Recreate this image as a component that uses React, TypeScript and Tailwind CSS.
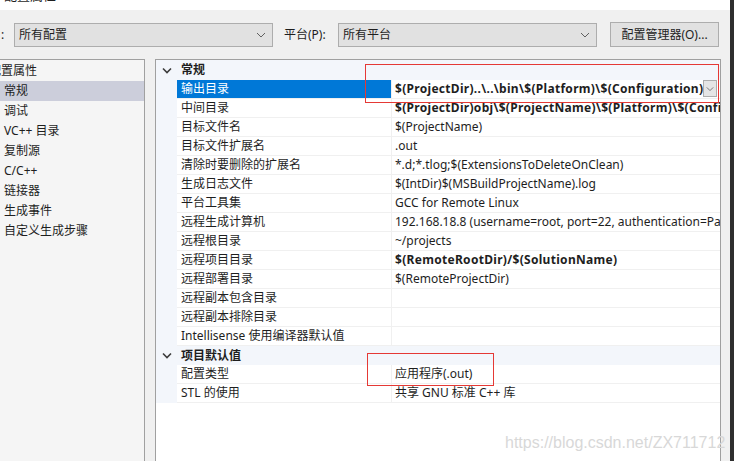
import React from 'react';

const font = '[font-family:"Noto_Sans","Noto_Sans_CJK_SC",sans-serif]';

type Row = { name: string; value: string; bold?: boolean; selected?: boolean };

const general: Row[] = [
  { name: '输出目录', value: '$(ProjectDir)..\\..\\bin\\$(Platform)\\$(Configuration)', bold: true, selected: true },
  { name: '中间目录', value: '$(ProjectDir)obj\\$(ProjectName)\\$(Platform)\\$(Configuration)\\', bold: true },
  { name: '目标文件名', value: '$(ProjectName)' },
  { name: '目标文件扩展名', value: '.out' },
  { name: '清除时要删除的扩展名', value: '*.d;*.tlog;$(ExtensionsToDeleteOnClean)' },
  { name: '生成日志文件', value: '$(IntDir)$(MSBuildProjectName).log' },
  { name: '平台工具集', value: 'GCC for Remote Linux' },
  { name: '远程生成计算机', value: '192.168.18.8 (username=root, port=22, authentication=Password)' },
  { name: '远程根目录', value: '~/projects' },
  { name: '远程项目目录', value: '$(RemoteRootDir)/$(SolutionName)', bold: true },
  { name: '远程部署目录', value: '$(RemoteProjectDir)' },
  { name: '远程副本包含目录', value: '' },
  { name: '远程副本排除目录', value: '' },
  { name: 'Intellisense 使用编译器默认值', value: '' },
];

const defaults: Row[] = [
  { name: '配置类型', value: '应用程序(.out)' },
  { name: 'STL 的使用', value: '共享 GNU 标准 C++ 库' },
];

const tree = ['常规', '调试', 'VC++ 目录', '复制源', 'C/C++', '链接器', '生成事件', '自定义生成步骤'];

function Chevron({ className }: { className?: string }) {
  return (
    <svg width="10" height="6" viewBox="0 0 10 6" className={className}>
      <path d="M1 1 L5 5 L9 1" fill="none" stroke="currentColor" strokeWidth="1" />
    </svg>
  );
}

function Combo({ text }: { text: string }) {
  return (
    <div className="w-[259px] h-[24px] bg-[#e1e1e1] border border-[#adadad] flex items-center justify-between pl-[4px] pr-[6px]">
      <span>{text}</span>
      <Chevron className="text-[#606060]" />
    </div>
  );
}

function Category({ title, h }: { title: string; h: string }) {
  return (
    <div className={`flex items-center bg-[#f3f6fb] ${h}`}>
      <div className="w-[21px] shrink-0 flex justify-center pl-[1px]">
        <svg width="10" height="7" viewBox="0 0 10 7">
          <path d="M1 1.5 L5 5.5 L9 1.5" fill="none" stroke="#3c3c3c" strokeWidth="1.6" />
        </svg>
      </div>
      <span className="pl-[4px] font-bold text-[#1e1e1e]">{title}</span>
    </div>
  );
}

function PropRow({ row }: { row: Row }) {
  return (
    <div className="flex h-[19px] bg-[#f3f6fb]">
      <div className="w-[21px] shrink-0" />
      <div className="flex flex-1 min-w-0 border-b border-[#f0f0f0] bg-white">
        <div
          className={`w-[215px] shrink-0 pl-[4px] flex items-center whitespace-nowrap overflow-hidden border-r border-[#f0f0f0] ${
            row.selected ? 'bg-[#0078d7] text-white' : 'text-[#1e1e1e]'
          }`}
        >
          {row.name}
        </div>
        <div className="flex-1 min-w-0 flex items-center pl-[3px] overflow-hidden relative">
          <span className={`whitespace-nowrap ${row.bold ? 'font-bold tracking-[0.3px]' : ''}`}>{row.value}</span>
          {row.selected && (
            <div className="absolute right-[3px] top-0 w-[14px] h-[17px] bg-[#e5e5e5] border border-[#adadad] flex items-center justify-center">
              <Chevron className="text-[#606060] w-[8px]" />
            </div>
          )}
        </div>
      </div>
    </div>
  );
}

export default function App() {
  return (
    <div className={`w-[734px] h-[461px] overflow-hidden flex bg-[#f0f0f0] text-[12px] text-[#1e1e1e] relative ${font}`}>
      <div className="w-[730px] flex flex-col">
        {/* cut-off title line */}
        <div className="h-[10px] bg-white overflow-hidden">
          <div className="-mt-[13px] pl-[4px] leading-[16px] text-[13px]">配置属性</div>
        </div>

        {/* toolbar */}
        <div className="h-[49px] flex items-start pt-[13px]">
          <span className="w-[14px] pl-[1px] leading-[24px]">:</span>
          <Combo text="所有配置" />
          <span className="ml-[11px] w-[54px] leading-[24px]">平台(P):</span>
          <Combo text="所有平台" />
          <button className="ml-[13px] -mt-[1px] w-[109px] h-[25px] bg-[#e1e1e1] border border-[#adadad] text-[12px]">
            配置管理器(O)...
          </button>
        </div>

        {/* panels */}
        <div className="flex flex-1 min-h-0">
          <div className="w-[145px] shrink-0 bg-[#f5f5f5] border-t border-r border-[#a0a0a0] pt-[1px] overflow-hidden">
            <div className="h-[20px] flex items-center -ml-[11px] whitespace-nowrap">配置属性</div>
            {tree.map((t, i) => (
              <div
                key={t}
                className={`h-[20px] flex items-center pl-[4px] whitespace-nowrap ${i === 0 ? 'bg-[#cccedb]' : ''}`}
              >
                {t}
              </div>
            ))}
          </div>

          <div className="ml-[10px] w-[566px] shrink-0 bg-white border-t border-l border-r border-[#a0a0a0] flex flex-col overflow-hidden">
            <Category title="常规" h="h-[20px]" />
            {general.map((r) => (
              <PropRow key={r.name} row={r} />
            ))}
            <Category title="项目默认值" h="h-[19px]" />
            {defaults.map((r) => (
              <PropRow key={r.name} row={r} />
            ))}
          </div>
        </div>
      </div>
      <div className="w-[4px] bg-[#2e2e2e]" />

      {/* annotation boxes */}
      <div className="absolute left-[365px] top-[64px] w-[354px] h-[39px] border border-[#e53935]" />
      <div className="absolute left-[367px] top-[353px] w-[127px] h-[33px] border border-[#e53935]" />

      {/* watermark */}
      <div className="absolute left-[505px] top-[431px] text-[16px] text-[#d8d8d8] [font-family:'Liberation_Sans',Arial,sans-serif]">
        https://blog.csdn.net/ZX711712
      </div>
    </div>
  );
}
